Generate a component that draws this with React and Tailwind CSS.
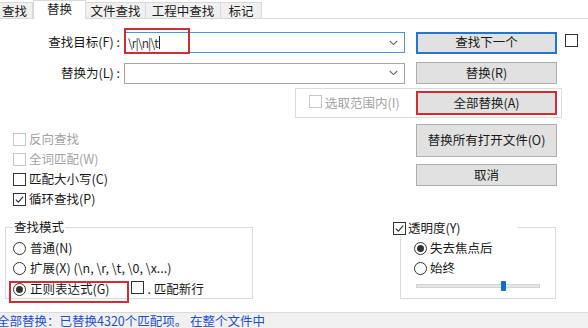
import React from "react";

function Check({ checked = false, disabled = false }) {
  return (
    <span
      className={
        disabled
          ? "inline-flex w-[13px] h-[13px] shrink-0 border border-[#c8c8c8] bg-white"
          : "inline-flex w-[13px] h-[13px] shrink-0 border border-[#333333] bg-white items-center justify-center"
      }
    >
      {checked && (
        <svg width="11" height="11" viewBox="0 0 11 11">
          <path d="M1.8 5.6 L4.3 8.1 L9.2 2.6" fill="none" stroke="#333333" strokeWidth="1.2" />
        </svg>
      )}
    </span>
  );
}

function Radio({ selected = false }) {
  return (
    <span className="inline-flex w-[13px] h-[13px] shrink-0 rounded-full border border-[#333333] bg-white items-center justify-center">
      {selected && <span className="w-[7px] h-[7px] rounded-full bg-[#333333]" />}
    </span>
  );
}

function Chevron() {
  return (
    <svg width="9" height="6" viewBox="0 0 9 6" className="mr-[6px]">
      <path d="M0.8 1 L4.5 4.6 L8.2 1" fill="none" stroke="#666666" strokeWidth="1.1" />
    </svg>
  );
}

export default function App() {
  return (
    <div className="w-[588px] h-[328px] overflow-hidden bg-white text-[12.5px] text-[#1a1a1a] font-['Noto_Sans_CJK_SC','Noto_Sans',sans-serif] flex flex-col">
      {/* Tabs */}
      <div className="h-[19px] flex shrink-0">
        <div className="w-[33px] h-[17px] mt-[2px] bg-[#f0f0f0] border-y border-r border-[#d9d9d9] pl-[2px] leading-[15px] text-[#222]">
          查找
        </div>
        <div className="w-[53px] h-[19px] bg-white border-x border-t border-[#d9d9d9] flex justify-center leading-[15px] text-[#222]">
          替换
        </div>
        <div className="w-[60px] h-[17px] mt-[2px] bg-[#f0f0f0] border-y border-r border-[#d9d9d9] flex justify-center leading-[15px] text-[#222]">
          文件查找
        </div>
        <div className="w-[75px] h-[17px] mt-[2px] bg-[#f0f0f0] border-y border-r border-[#d9d9d9] flex justify-center leading-[15px] text-[#222]">
          工程中查找
        </div>
        <div className="w-[41px] h-[17px] mt-[2px] bg-[#f0f0f0] border-y border-r border-[#d9d9d9] flex justify-center leading-[15px] text-[#222]">
          标记
        </div>
        <div className="flex-1 border-b border-[#d9d9d9]" />
      </div>

      {/* Row A */}
      <div className="mt-[12px] h-[23px] flex items-center shrink-0">
        <div className="w-[124px] pr-[4px] text-right">查找目标(F) :</div>
        <div className="relative w-[281px] h-[21px] border border-[#4d95d6] bg-white flex items-center">
          <span className="pl-[3px] text-[12px] text-[#333] tracking-[-0.9px]">\r|\n|\t</span>
          <span className="ml-[1px] w-px h-[13px] bg-[#222]" />
          <span className="flex-1" />
          <Chevron />
          <div className="absolute left-[-1px] top-[-5px] w-[66px] h-[26px] border-2 border-[#d02e36]" />
        </div>
        <button className="ml-[11px] w-[141px] h-[22px] bg-[#e1e1e1] border-2 border-[#2079d0] flex items-center justify-center">
          查找下一个
        </button>
        <span className="ml-[8px]">
          <Check />
        </span>
      </div>

      {/* Row B */}
      <div className="mt-[8px] h-[22px] flex items-center shrink-0">
        <div className="w-[124px] pr-[4px] text-right">替换为(L) :</div>
        <div className="w-[281px] h-[21px] border border-[#a8a8a8] bg-white flex items-center justify-end">
          <Chevron />
        </div>
        <button className="ml-[11px] w-[141px] h-[22px] bg-[#e1e1e1] border border-[#adadad] flex items-center justify-center">
          替换(R)
        </button>
      </div>

      {/* Row C: selection group */}
      <div className="mt-[4px] ml-[295px] w-[267px] h-[30px] border border-[#dcdcdc] flex items-center shrink-0">
        <span className="ml-[13px]">
          <Check disabled />
        </span>
        <span className="ml-[3px] text-[#a3a3a3]">选取范围内(I)</span>
        <button className="ml-auto mr-[4px] w-[141px] h-[24px] bg-[#e1e1e1] border-2 border-[#d02e36] flex items-center justify-center">
          全部替换(A)
        </button>
      </div>

      {/* Middle */}
      <div className="h-[101px] flex shrink-0">
        <div className="w-[404px] pt-[11px] pl-[13px] flex flex-col">
          <div className="h-[20px] flex items-center gap-[3px] text-[#a3a3a3]">
            <Check disabled />
            <span>反向查找</span>
          </div>
          <div className="h-[20px] flex items-center gap-[3px] text-[#a3a3a3]">
            <Check disabled />
            <span>全词匹配(W)</span>
          </div>
          <div className="h-[20px] flex items-center gap-[3px]">
            <Check />
            <span>匹配大小写(C)</span>
          </div>
          <div className="h-[20px] flex items-center gap-[3px]">
            <Check checked />
            <span>循环查找(P)</span>
          </div>
        </div>
        <div className="ml-[12px] flex flex-col">
          <button className="mt-[6px] w-[141px] h-[33px] bg-[#e1e1e1] border border-[#adadad] flex items-center justify-center">
            替换所有打开文件(O)
          </button>
          <button className="mt-[7px] w-[141px] h-[22px] bg-[#e1e1e1] border border-[#adadad] flex items-center justify-center">
            取消
          </button>
        </div>
      </div>

      {/* Bottom groups */}
      <div className="h-[93px] flex shrink-0">
        <div className="relative ml-[5px] mt-[8px] w-[248px] h-[72px] border border-[#dcdcdc] pl-[7px] pt-[10px]">
          <span className="absolute left-[7px] top-[-9px] px-[1px] bg-white leading-[16px]">查找模式</span>
          <div className="h-[20px] flex items-center gap-[4px]">
            <Radio />
            <span>普通(N)</span>
          </div>
          <div className="h-[20px] flex items-center gap-[4px]">
            <Radio />
            <span>扩展(X) (\n, \r, \t, \0, \x...)</span>
          </div>
          <div className="mt-[1px] h-[20px] flex items-center gap-[4px]">
            <Radio selected />
            <span>正则表达式(G)</span>
            <span className="ml-[17px]">
              <Check />
            </span>
            <span>. 匹配新行</span>
          </div>
          <div className="absolute left-[3px] top-[53px] w-[120px] h-[22px] border-2 border-[#d02e36]" />
        </div>

        <div className="relative ml-[147px] mt-[8px] w-[156px] h-[72px] border border-[#dcdcdc] pl-[13px] pt-[10px]">
          <div className="absolute left-[-8px] top-[-8px] w-[124px] h-[16px] bg-white flex items-center gap-[2px]">
            <Check checked />
            <span>透明度(Y)</span>
          </div>
          <div className="h-[20px] flex items-center gap-[3px]">
            <Radio selected />
            <span>失去焦点后</span>
          </div>
          <div className="h-[20px] flex items-center gap-[3px]">
            <Radio />
            <span>始终</span>
          </div>
          <div className="relative mt-[3px] ml-[2px] w-[124px] h-[10px] flex items-center">
            <div className="w-full h-[4px] bg-[#e7e7e7] border border-[#d4d4d4]" />
            <div className="absolute left-[85px] top-0 w-[5px] h-[10px] rounded-[1px] bg-[#0a6fd0]" />
          </div>
        </div>
      </div>

      {/* Status bar */}
      <div className="flex-1 bg-[#f0f0f0] border-t border-[#dadada] overflow-hidden">
        <div className="ml-[-3px] leading-[16px] text-[#1f4fd1] whitespace-nowrap">
          全部替换：已替换4320个匹配项。 在整个文件中
        </div>
      </div>
    </div>
  );
}
